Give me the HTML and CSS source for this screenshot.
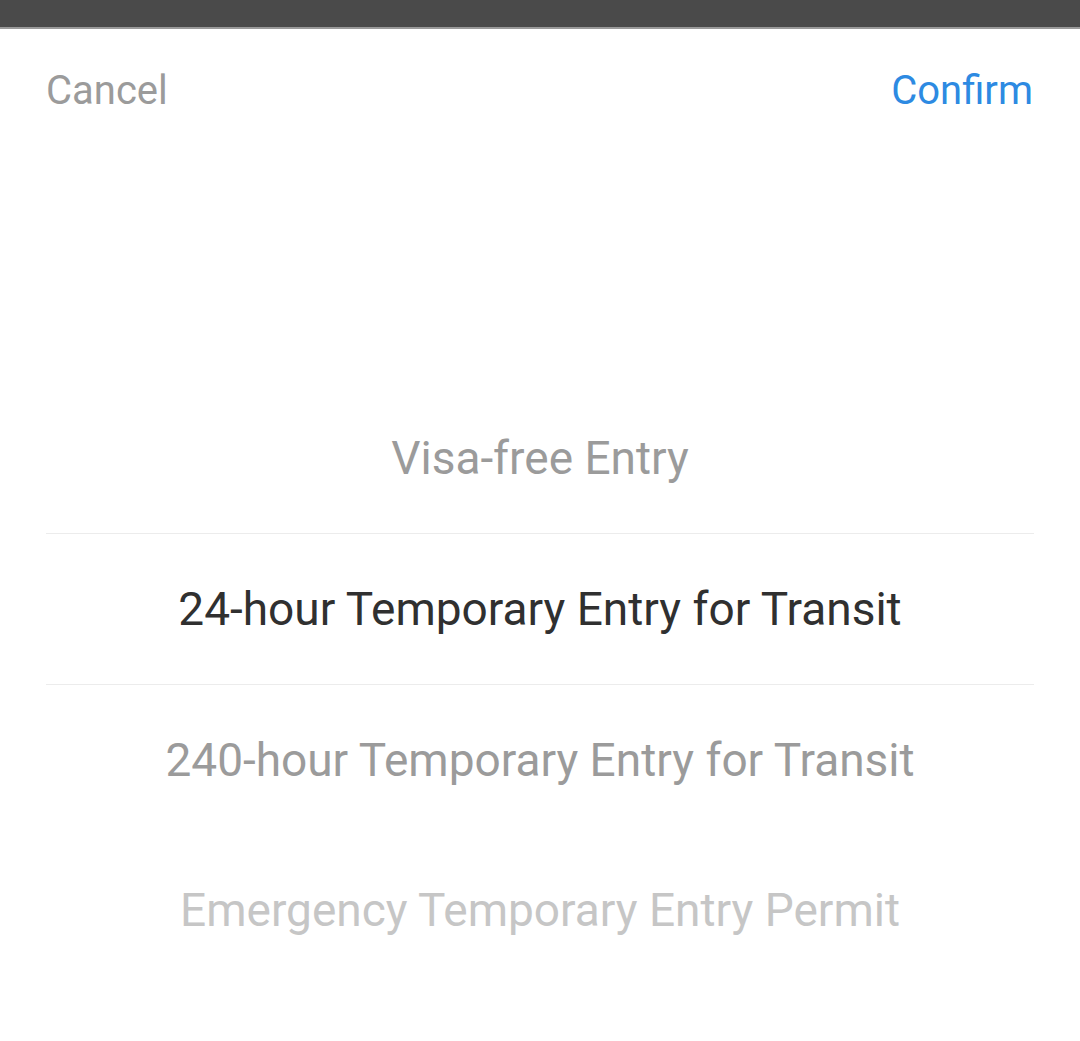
FILE: index.html
```html
<!DOCTYPE html>
<html>
<head>
<meta charset="utf-8">
<link rel="stylesheet" href="styles.css">
</head>
<body>
<div class="topbar"></div>
<div class="sheet">
  <div class="header">
    <span class="cancel">Cancel</span>
    <span class="confirm">Confirm</span>
  </div>
  <div class="picker">
    <div class="item">Visa-free Entry</div>
    <div class="item selected">24-hour Temporary Entry for Transit</div>
    <div class="item">240-hour Temporary Entry for Transit</div>
    <div class="item far">Emergency Temporary Entry Permit</div>
  </div>
</div>
</body>
</html>
```
FILE: styles.css
```css
html, body {
  margin: 0;
  padding: 0;
  background: #ffffff;
}
body {
  width: 1080px;
  height: 1041px;
  overflow: hidden;
  font-family: Roboto, "Noto Sans", sans-serif;
}
.topbar {
  height: 27px;
  background: #4a4a4a;
  border-bottom: 2px solid #9a9a9a;
}
.sheet {
  background: #fff;
}
.header {
  display: flex;
  justify-content: space-between;
  align-items: center;
  height: 122px;
  padding: 0 47px 0 46px;
  font-size: 40px;
}
.cancel { color: #9b9b9b; }
.confirm { color: #2d8ae2; }
.picker {
  margin-top: 232px;
  padding: 0 46px;
}
.item {
  height: 150px;
  display: flex;
  align-items: center;
  justify-content: center;
  font-size: 46px;
  color: #9b9b9b;
}
.item.selected {
  color: #303030;
  border-top: 1px solid #ececec;
  border-bottom: 1px solid #ececec;
  height: 150px;
}
.item.far { color: #c6c6c6; }
```
